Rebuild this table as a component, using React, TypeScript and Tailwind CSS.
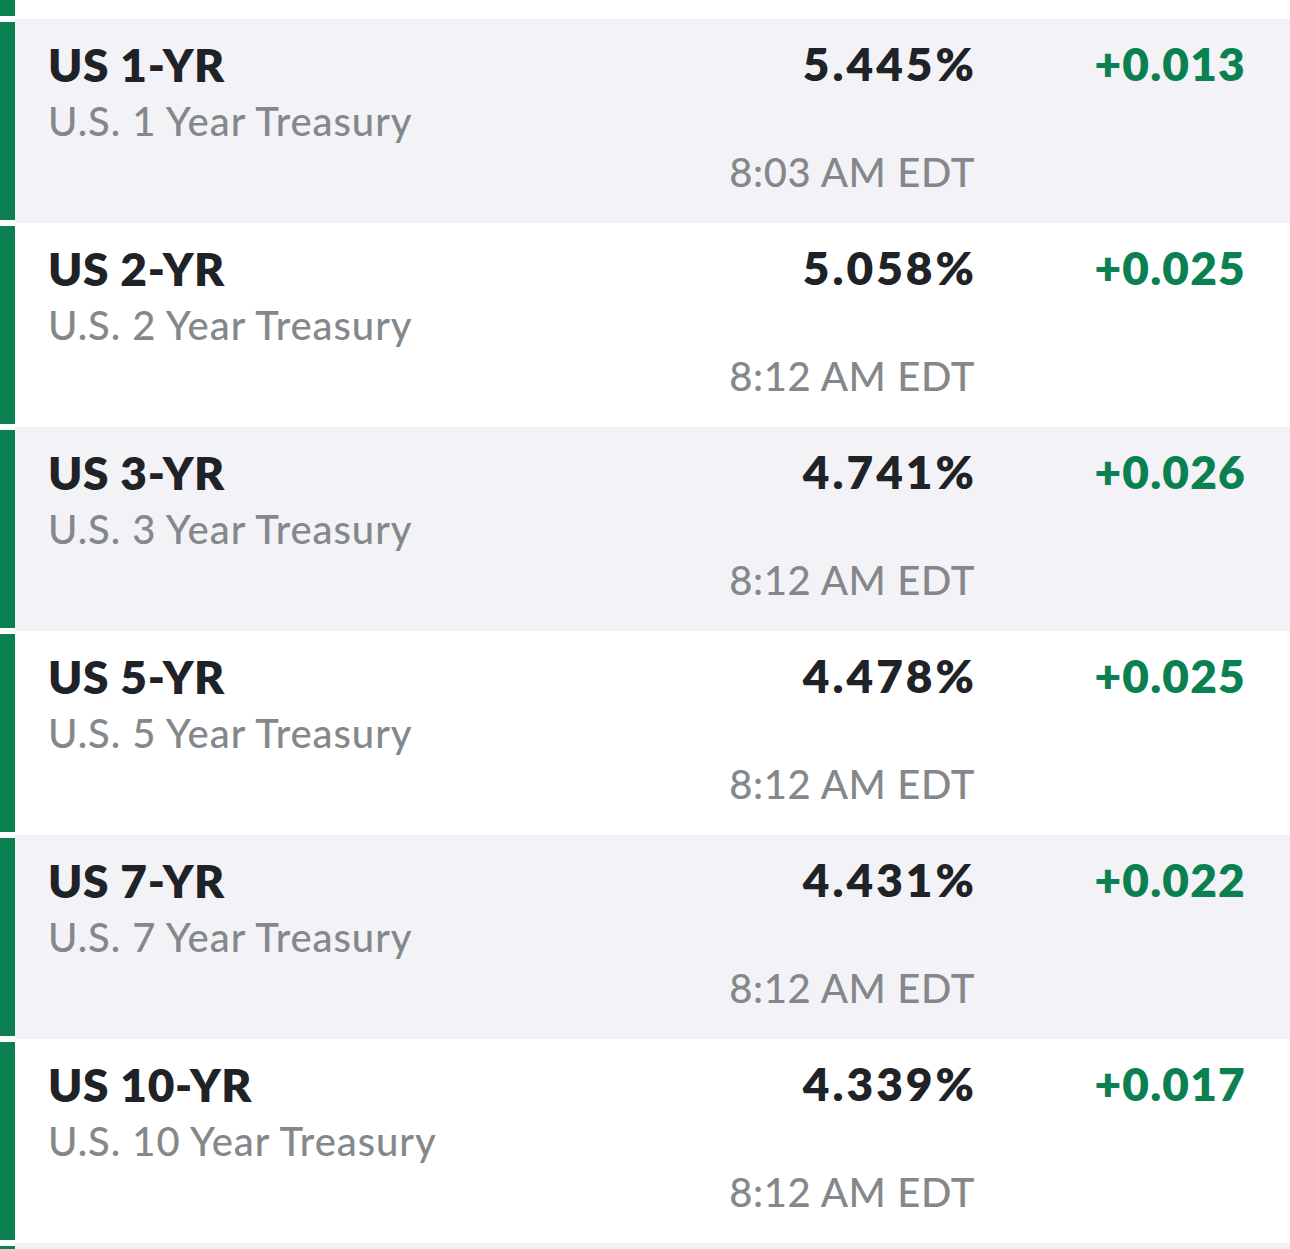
import React from "react";

type Row = { sym: string; name: string; value: string; change: string; time: string };

const rows: Row[] = [
  { sym: "US 1-YR", name: "U.S. 1 Year Treasury", value: "5.445%", change: "+0.013", time: "8:03 AM EDT" },
  { sym: "US 2-YR", name: "U.S. 2 Year Treasury", value: "5.058%", change: "+0.025", time: "8:12 AM EDT" },
  { sym: "US 3-YR", name: "U.S. 3 Year Treasury", value: "4.741%", change: "+0.026", time: "8:12 AM EDT" },
  { sym: "US 5-YR", name: "U.S. 5 Year Treasury", value: "4.478%", change: "+0.025", time: "8:12 AM EDT" },
  { sym: "US 7-YR", name: "U.S. 7 Year Treasury", value: "4.431%", change: "+0.022", time: "8:12 AM EDT" },
  { sym: "US 10-YR", name: "U.S. 10 Year Treasury", value: "4.339%", change: "+0.017", time: "8:12 AM EDT" },
];

function Strip({ bg, h, children }: { bg: string; h: string; children?: React.ReactNode }) {
  return (
    <div className={`flex shrink-0 ${h}`}>
      <div className="w-[15px] bg-white flex flex-col py-[3px]">
        <div className="flex-1 bg-[#0b8151]" />
      </div>
      <div className={`flex-1 ${bg}`}>{children}</div>
    </div>
  );
}

export default function App() {
  return (
    <div
      className="w-[1290px] h-[1249px] overflow-hidden bg-white flex flex-col"
      style={{ fontFamily: "Lato, 'Open Sans', sans-serif" }}
    >
      <div className="h-[19px] shrink-0 overflow-hidden flex flex-col justify-end">
        <Strip bg="bg-white" h="h-[204px]" />
      </div>
      {rows.map((r, i) => (
        <Strip key={r.sym} bg={i % 2 === 0 ? "bg-[#f3f3f7]" : "bg-white"} h="h-[204px]">
          <div className="flex h-full">
            <div className="flex-1 pl-[33px] pt-[18px] flex flex-col">
              <div className="text-[46px] leading-[56px] font-extrabold text-[#1f2226] tracking-[0.6px]">{r.sym}</div>
              <div className="text-[40px] leading-[56px] font-medium text-[#85888b] tracking-[0.95px]">{r.name}</div>
            </div>
            <div className="pt-[17px] flex flex-col items-end">
              <div className="text-[46px] leading-[56px] font-extrabold text-[#1f2226] tracking-[3px] mr-[-5px]">{r.value}</div>
              <div className="mt-[52px] text-[40px] leading-[56px] font-medium text-[#85888b] tracking-[0.6px] mr-[-3px]">{r.time}</div>
            </div>
            <div className="w-[318px] pr-[47px] pt-[17px] flex flex-col items-end">
              <div className="text-[46px] leading-[56px] font-extrabold text-[#0b8151] tracking-[1.2px] mr-[-3px]">{r.change}</div>
            </div>
          </div>
        </Strip>
      ))}
      <Strip bg="bg-[#f3f3f7]" h="h-[204px]" />
    </div>
  );
}
